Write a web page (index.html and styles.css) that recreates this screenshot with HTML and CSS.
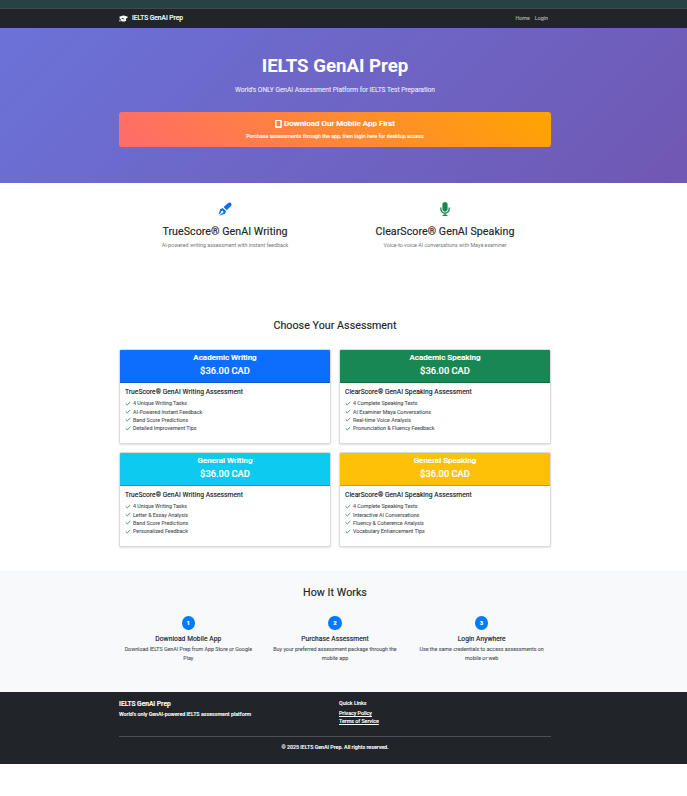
FILE: index.html
```html
<!DOCTYPE html>
<html lang="en">
<head>
<meta charset="utf-8">
<title>IELTS GenAI Prep</title>
<link rel="stylesheet" href="styles.css">
</head>
<body>
<svg class="sprite" width="0" height="0" aria-hidden="true">
  <symbol id="check" viewBox="0 0 12 10"><path d="M1.5 5 4.5 7.8 10.5 2" fill="none" stroke="currentColor" stroke-width="1.9"/></symbol>
</svg>
<div class="topstrip"></div>
<nav class="navbar">
  <div class="container nav-row">
    <a class="brand">
      <svg class="cap" viewBox="0 0 640 512"><path fill="currentColor" d="M320 32c-8 0-16 1-24 4L16 137c-10 4-16 13-16 23s6 19 16 23l58 21c-16 25-26 55-26 88v28c0 28-11 58-22 80-7 13-14 25-23 37-3 3-4 8-2 12s5 7 9 8l64 16c4 1 9 0 13-2s6-6 7-10c9-43 4-81-3-109V300l160-80 180 84c8 3 16 4 24 4L624 183c10-4 16-13 16-23s-6-19-16-23L344 36c-8-3-16-4-24-4zM128 408c0 35 86 72 192 72s192-37 192-72l-15-146-142 51c-11 4-23 6-35 6s-24-2-35-6l-142-51-15 146z"/></svg>
      <span>IELTS GenAI Prep</span>
    </a>
    <div class="nav-links"><a>Home</a><a>Login</a></div>
  </div>
</nav>
<header class="hero">
  <div class="container">
    <h1>IELTS GenAI Prep</h1>
    <p class="lead">World's ONLY GenAI Assessment Platform for IELTS Test Preparation</p>
    <div class="banner">
      <h4><svg class="phone" viewBox="0 0 7 8"><path fill="#fff" fill-rule="evenodd" d="M.8 0h5.2q.8 0 .8.8v6.4q0 .8-.8.8H.8Q0 8 0 7.2V.8Q0 0 .8 0zM1.5 1v5.2h3.8V1z"/></svg><span>Download Our Mobile App First</span></h4>
      <p>Purchase assessments through the app, then login here for desktop access</p>
    </div>
  </div>
</header>
<section class="features">
  <div class="container two">
    <div class="feature">
      <svg class="ficon blue" viewBox="0 0 14 14"><path fill="currentColor" d="M12.9.9c-.8-.8-1.9-.6-2.7.1L5.6 5.1l3.2 3.2 4.3-4.5c.7-.9.6-2.1-.2-2.9zM4.8 5.9 2.2 7.2.5 13l2.5-2.5a1.2 1.2 0 1 1 .7.7L1.2 13.7l5.9-1.9.9-2.7z"/></svg>
      <h3>TrueScore® GenAI Writing</h3>
      <p>AI-powered writing assessment with instant feedback</p>
    </div>
    <div class="feature">
      <svg class="ficon green" viewBox="0 0 384 512"><path fill="currentColor" d="M192 0c-53 0-96 43-96 96v160c0 53 43 96 96 96s96-43 96-96V96c0-53-43-96-96-96zM64 216c0-13-11-24-24-24s-24 11-24 24v40c0 89 66 163 152 174v34h-48c-13 0-24 11-24 24s11 24 24 24h144c13 0 24-11 24-24s-11-24-24-24h-48v-34c86-11 152-85 152-174v-40c0-13-11-24-24-24s-24 11-24 24v40c0 71-57 128-128 128S64 327 64 256z"/></svg>
      <h3>ClearScore® GenAI Speaking</h3>
      <p>Voice-to-voice AI conversations with Maya examiner</p>
    </div>
  </div>
</section>
<section class="plans">
  <div class="container">
    <h2>Choose Your Assessment</h2>
    <div class="two cards">
      <article class="card c-blue">
        <header><h4>Academic Writing</h4><b>$36.00 CAD</b></header>
        <div class="body"><h5>TrueScore® GenAI Writing Assessment</h5>
          <ul><li><svg><use href="#check"/></svg>4 Unique Writing Tasks</li><li><svg><use href="#check"/></svg>AI-Powered Instant Feedback</li><li><svg><use href="#check"/></svg>Band Score Predictions</li><li><svg><use href="#check"/></svg>Detailed Improvement Tips</li></ul></div>
      </article>
      <article class="card c-green">
        <header><h4>Academic Speaking</h4><b>$36.00 CAD</b></header>
        <div class="body"><h5>ClearScore® GenAI Speaking Assessment</h5>
          <ul><li><svg><use href="#check"/></svg>4 Complete Speaking Tests</li><li><svg><use href="#check"/></svg>AI Examiner Maya Conversations</li><li><svg><use href="#check"/></svg>Real-time Voice Analysis</li><li><svg><use href="#check"/></svg>Pronunciation &amp; Fluency Feedback</li></ul></div>
      </article>
      <article class="card c-cyan">
        <header><h4>General Writing</h4><b>$36.00 CAD</b></header>
        <div class="body"><h5>TrueScore® GenAI Writing Assessment</h5>
          <ul><li><svg><use href="#check"/></svg>4 Unique Writing Tasks</li><li><svg><use href="#check"/></svg>Letter &amp; Essay Analysis</li><li><svg><use href="#check"/></svg>Band Score Predictions</li><li><svg><use href="#check"/></svg>Personalized Feedback</li></ul></div>
      </article>
      <article class="card c-yellow">
        <header><h4>General Speaking</h4><b>$36.00 CAD</b></header>
        <div class="body"><h5>ClearScore® GenAI Speaking Assessment</h5>
          <ul><li><svg><use href="#check"/></svg>4 Complete Speaking Tests</li><li><svg><use href="#check"/></svg>Interactive AI Conversations</li><li><svg><use href="#check"/></svg>Fluency &amp; Coherence Analysis</li><li><svg><use href="#check"/></svg>Vocabulary Enhancement Tips</li></ul></div>
      </article>
    </div>
  </div>
</section>
<section class="how">
  <div class="container">
    <h2>How It Works</h2>
    <div class="steps">
      <div><i>1</i><h5>Download Mobile App</h5><p>Download IELTS GenAI Prep from App Store or Google<br>Play</p></div>
      <div><i>2</i><h5>Purchase Assessment</h5><p>Buy your preferred assessment package through the<br>mobile app</p></div>
      <div><i>3</i><h5>Login Anywhere</h5><p>Use the same credentials to access assessments on<br>mobile or web</p></div>
    </div>
  </div>
</section>
<footer class="footer">
  <div class="container">
    <div class="two">
      <div><h5>IELTS GenAI Prep</h5><p>World's only GenAI-powered IELTS assessment platform</p></div>
      <div><h6>Quick Links</h6><a>Privacy Policy</a><a>Terms of Service</a></div>
    </div>
    <p class="copy">© 2025 IELTS GenAI Prep. All rights reserved.</p>
  </div>
</footer>
</body>
</html>
```
FILE: styles.css
```css
* { box-sizing: border-box; margin: 0; padding: 0; }
body { font-family: Roboto, "Liberation Sans", sans-serif; font-size: 5.33px; line-height: 8px; color: #212529; background: #fff; }
h1, h2, h3, h4, h5, h6 { font-weight: 500; }
p, h1, h2, h3, h4, h5, h6, li, a { white-space: nowrap; }
.sprite { position: absolute; }
.container { width: 432px; margin-left: 119px; }
.two { display: grid; grid-template-columns: 212px 212px; column-gap: 8px; }

.topstrip { height: 9px; background: #284144; border-bottom: 1px solid #43494b; }
.navbar { height: 19px; background: #212529; }
.nav-row { display: flex; align-items: center; justify-content: space-between; height: 18px; }
.brand { display: flex; align-items: center; gap: 4px; color: #fff; font-size: 6.67px; -webkit-text-stroke: .2px #fff; }
.cap { width: 9px; height: 7px; }
.nav-links { display: flex; gap: 5px; padding-right: 3px; color: #a6a8a9; -webkit-text-stroke: .15px #a6a8a9; }

.hero { height: 155px; padding-top: 27px; text-align: center; color: #fff; background: linear-gradient(135deg, #6b72d8 0%, #7058b3 100%); }
.hero h1 { font-size: 18.67px; line-height: 22px; font-weight: 700; }
.lead { margin-top: 8px; font-size: 6.67px; line-height: 10px; letter-spacing: -.045px; color: #e9e6f7; -webkit-text-stroke: .1px #e9e6f7; }
.banner { margin-top: 17px; height: 35px; padding-top: 7px; border-radius: 3px; background: linear-gradient(45deg, #ff6b6b, #ffa500); }
.banner h4 { display: flex; justify-content: center; align-items: center; gap: 2px; font-size: 8px; line-height: 10px; -webkit-text-stroke: .2px #fff; }
.phone { width: 7px; height: 8px; }
.banner p { margin-top: 3px; color: #fff5e8; -webkit-text-stroke: .2px #fff5e8; }

.features { height: 125px; padding-top: 19px; text-align: center; }
.ficon { display: block; width: 14px; height: 14px; margin: 0 auto; }
.blue { color: #0d6efd; }
.green { color: #198754; }
.feature h3 { margin-top: 9px; font-size: 10.67px; line-height: 13px; font-weight: 400; letter-spacing: .05px; -webkit-text-stroke: .15px #212529; }
.feature p { margin-top: 3px; color: #71777d; }

.plans { height: 263px; padding-top: 11px; }
.plans h2, .how h2 { font-size: 10.67px; line-height: 14px; text-align: center; font-weight: 400; letter-spacing: .05px; -webkit-text-stroke: .15px #212529; }
.cards { margin-top: 16px; row-gap: 8px; }
.card { height: 95px; border: 1px solid #d9dadb; border-radius: 2px; box-shadow: 0 1px 2px rgba(0,0,0,.12); overflow: hidden; background: #fff; }
.card header { height: 33px; padding-top: 3px; text-align: center; color: #fff; border-bottom: 1px solid rgba(0,0,0,.18); }
.card h4 { font-size: 8px; line-height: 10px; -webkit-text-stroke: .2px #fff; }
.card b { display: block; margin-top: 2px; font-size: 9.33px; line-height: 12px; font-weight: 500; -webkit-text-stroke: .15px #fff; }
.c-blue header { background: #0d6efd; }
.c-green header { background: #198754; }
.c-cyan header { background: #0dcaf0; }
.c-yellow header { background: #ffc107; }
.body { padding: 5px 5px 0; }
.body h5 { font-size: 6.67px; line-height: 8px; font-weight: 400; letter-spacing: .06px; -webkit-text-stroke: .15px #212529; }
.body ul { margin-top: 3px; list-style: none; }
.body li { display: flex; align-items: center; height: 8.35px; color: #565a5e; -webkit-text-stroke: .1px #565a5e; }
.body li svg { width: 6px; height: 5px; margin-right: 2px; color: #2f9566; }

.how { height: 121px; padding-top: 15px; background: #f8f9fa; text-align: center; }
.steps { display: grid; grid-template-columns: repeat(3, 138.67px); column-gap: 8px; margin-top: 16px; }
.steps i { display: block; width: 13.33px; height: 14px; margin: 0 auto; border-radius: 50%; background: #007bff; color: #fff; font-style: normal; font-weight: 700; line-height: 14px; -webkit-text-stroke: .2px #fff; }
.steps h5 { margin-top: 5px; font-size: 6.67px; line-height: 8px; font-weight: 400; letter-spacing: .06px; -webkit-text-stroke: .15px #212529; }
.steps p { margin-top: 2px; line-height: 9px; color: #565a5e; -webkit-text-stroke: .1px #565a5e; }

.footer { height: 72px; padding-top: 8px; background: #212529; color: #fff; -webkit-text-stroke: .1px #fff; }
.footer h5 { font-size: 6.67px; line-height: 9px; -webkit-text-stroke: .2px #fff; }
.footer .two p { margin-top: 1px; font-weight: 500; letter-spacing: -.02px; }
.footer h6 { font-size: 5.33px; line-height: 8px; margin: -1px 0 2px; }
.footer a { display: block; text-decoration: underline; font-weight: 500; letter-spacing: -.03px; }
.footer .two { height: 36px; }
.copy { border-top: 1px solid #4d5154; padding-top: 6px; text-align: center; font-weight: 500; letter-spacing: -.02px; }
```
